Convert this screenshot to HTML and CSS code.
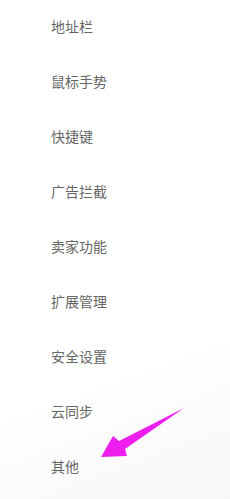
FILE: index.html
```html
<!DOCTYPE html>
<html lang="zh-CN">
<head>
    <meta charset="UTF-8">
    <meta name="viewport" content="width=device-width, initial-scale=1.0">
    <title>设置</title>
    <link rel="stylesheet" href="styles.css">
</head>
<body>
    <div class="menu">
        <div class="menu-item">地址栏</div>
        <div class="menu-item">鼠标手势</div>
        <div class="menu-item">快捷键</div>
        <div class="menu-item">广告拦截</div>
        <div class="menu-item">卖家功能</div>
        <div class="menu-item">扩展管理</div>
        <div class="menu-item">安全设置</div>
        <div class="menu-item">云同步</div>
        <div class="menu-item">其他</div>
    </div>
    <svg class="pointer" width="230" height="499" viewBox="0 0 230 499">
        <polygon points="101,457 113,436 119,441 184,408 125,449 127,456" fill="#ee1fee"/>
    </svg>
</body>
</html>
```

FILE: styles.css
```css
html, body {
    height: 100%;
    margin: 0;
    padding: 0;
}
body {
    font-family: "Noto Sans CJK SC", "Liberation Sans", sans-serif;
    background: linear-gradient(160deg, #fff 70%, #f7f7f7 100%);
    position: relative;
    overflow: hidden;
}
.menu {
    padding-left: 51px;
}
.menu-item {
    font-size: 14px;
    line-height: 20px;
    padding: 16px 0 19px;
    color: #666;
}
.pointer {
    position: absolute;
    top: 0;
    left: 0;
}
```
